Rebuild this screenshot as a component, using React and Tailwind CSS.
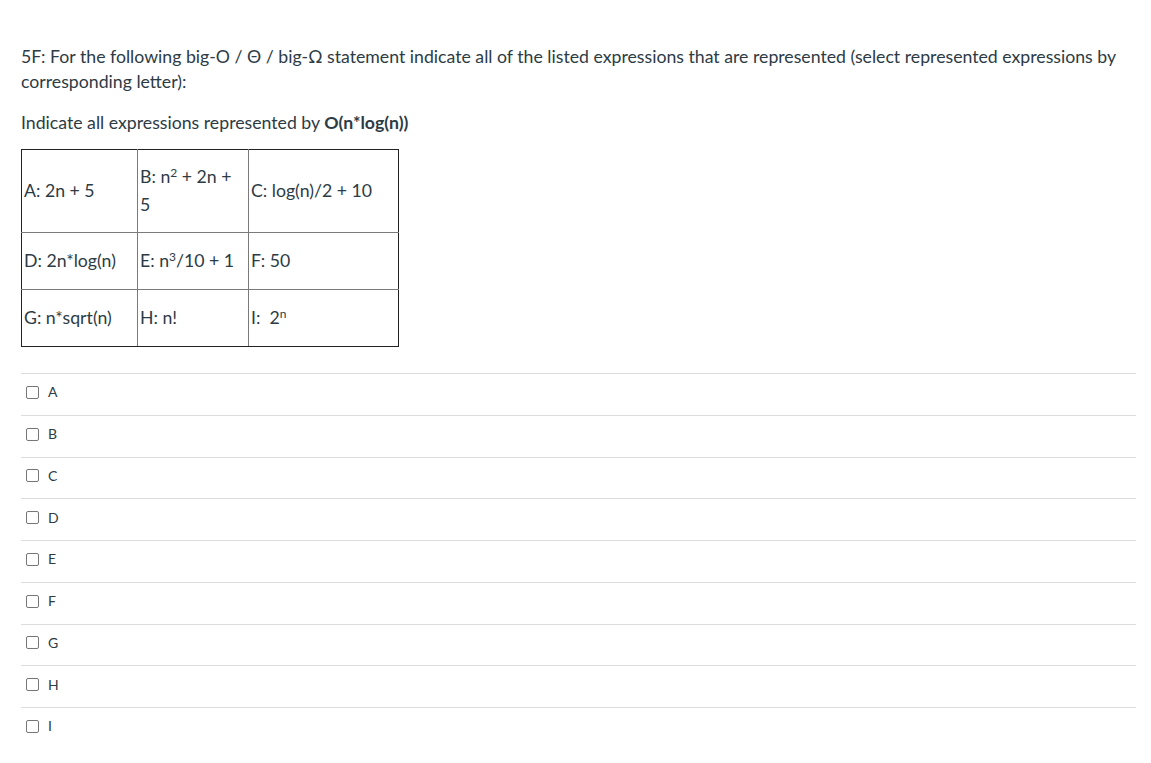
import React from 'react';

const options = ['A', 'B', 'C', 'D', 'E', 'F', 'G', 'H', 'I'];

const Cell = ({ children, className = '' }) => (
  <td className={`border border-[#7a7a7a] pl-[2px] pr-[2px] align-middle ${className}`}>
    {children}
  </td>
);

const App = () => {
  return (
    <div className="min-h-screen bg-white text-[#2d3b45] font-['Lato','Liberation_Sans',sans-serif]">
      <div className="pl-[21px] pr-[15px] pt-[44px]">
        <p className="text-[17.7px] leading-[25px]">
          5F: For the following big-O / Θ / big-Ω statement indicate all of the listed expressions that are represented (select represented expressions by corresponding letter):
        </p>
        <p className="mt-[16px] text-[17.7px] leading-[25px]">
          Indicate all expressions represented by <strong className="font-bold">O(n*log(n))</strong>
        </p>

        <table className="mt-[14px] border-collapse border border-[#222] text-[17.7px] leading-[24px]">
          <tbody>
            <tr className="h-[83px]">
              <Cell className="w-[116px] border-l-[#222] border-t-[#222]">A: 2n + 5</Cell>
              <Cell className="w-[111px] border-t-[#222] leading-[28px]">
                B: n<sup className="text-[12px]">2</sup> + 2n +<br />5
              </Cell>
              <Cell className="w-[150px] border-r-[#222] border-t-[#222]">C: log(n)/2 + 10</Cell>
            </tr>
            <tr className="h-[57px]">
              <Cell className="border-l-[#222]">D: 2n*log(n)</Cell>
              <Cell>E: n<sup className="text-[12px]">3</sup>/10 + 1</Cell>
              <Cell className="border-r-[#222]">F: 50</Cell>
            </tr>
            <tr className="h-[57px]">
              <Cell className="border-l-[#222] border-b-[#222]">G: n*sqrt(n)</Cell>
              <Cell className="border-b-[#222]">H: n!</Cell>
              <Cell className="border-r-[#222] border-b-[#222]">
                I:&nbsp; 2<sup className="text-[12px]">n</sup>
              </Cell>
            </tr>
          </tbody>
        </table>

        <div className="mt-[26px]">
          {options.map((o) => (
            <label
              key={o}
              className="flex h-[41.75px] items-center border-t border-[#dcdcdc] pb-[4px] pl-[5px]"
            >
              <span className="h-[13px] w-[13px] rounded-[2px] border border-[#767676] bg-white" />
              <span className="ml-[9px] text-[14px] leading-none">{o}</span>
            </label>
          ))}
        </div>
      </div>
    </div>
  );
};

export default App;
